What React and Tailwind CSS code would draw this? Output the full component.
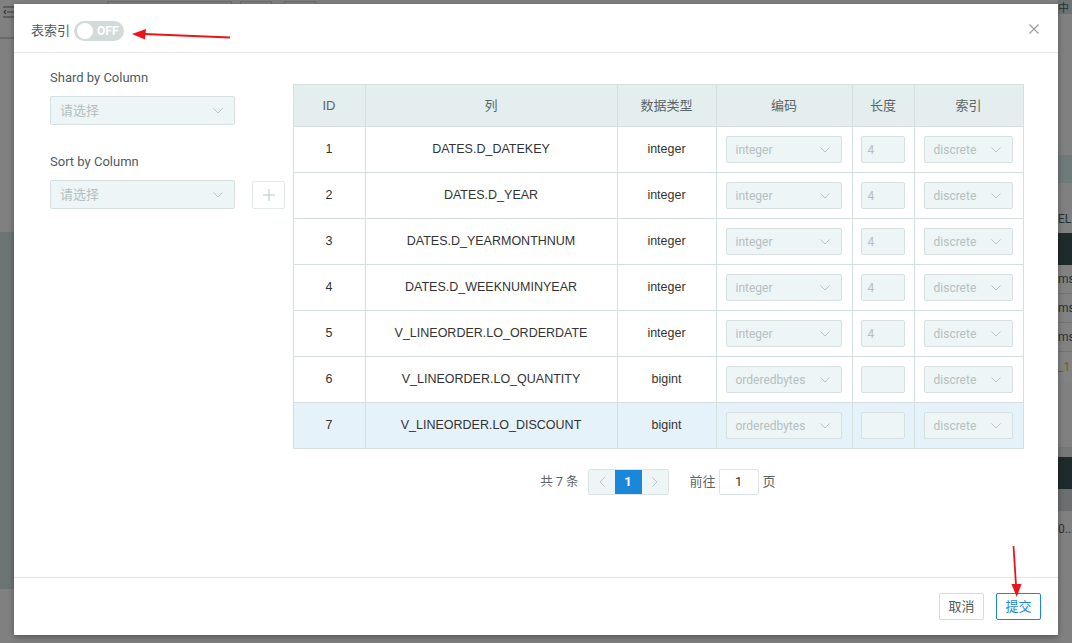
import { useState } from "react";

const rows = [
  { id: 1, col: "DATES.D_DATEKEY", type: "integer", enc: "integer", len: "4" },
  { id: 2, col: "DATES.D_YEAR", type: "integer", enc: "integer", len: "4" },
  { id: 3, col: "DATES.D_YEARMONTHNUM", type: "integer", enc: "integer", len: "4" },
  { id: 4, col: "DATES.D_WEEKNUMINYEAR", type: "integer", enc: "integer", len: "4" },
  { id: 5, col: "V_LINEORDER.LO_ORDERDATE", type: "integer", enc: "integer", len: "4" },
  { id: 6, col: "V_LINEORDER.LO_QUANTITY", type: "bigint", enc: "orderedbytes", len: "" },
  { id: 7, col: "V_LINEORDER.LO_DISCOUNT", type: "bigint", enc: "orderedbytes", len: "" },
];

const font = { fontFamily: "Roboto, 'Noto Sans CJK SC', sans-serif" };
const cellFont = { fontFamily: "'Liberation Sans', 'Noto Sans CJK SC', sans-serif" };

function Chevron({ className = "" }) {
  return (
    <svg width="10" height="6" viewBox="0 0 10 6" className={className}>
      <path d="M0.5 0.5 L5 5 L9.5 0.5" fill="none" stroke="#b9c4c6" strokeWidth="1" />
    </svg>
  );
}

function FakeSelect({ value, className = "" }) {
  return (
    <div
      className={`flex items-center justify-between border border-[#d6e0e1] bg-[#eef5f6] rounded-[2px] text-[12px] text-[#b4bfc1] ${className}`}
      style={font}
    >
      <span>{value}</span>
      <Chevron />
    </div>
  );
}

function BackgroundPage() {
  return (
    <div className="absolute inset-0 flex">
      <div className="w-[14px] flex flex-col">
        <div className="h-[232px] bg-[#808080] relative">
          <svg width="12" height="12" viewBox="0 0 12 12" className="absolute left-[3px] top-[6px]">
            <path d="M0 1 H12 M4 6 H12 M0 11 H12 M3 4 L1 6 L3 8" stroke="#3a3a3a" strokeWidth="1.2" fill="none" />
          </svg>
          <div className="absolute left-0 top-[37px] w-full h-[2px] bg-[#6a6a6a]" />
        </div>
        <div className="h-[357px] bg-[#6c7474]" />
        <div className="flex-1 bg-[#808080]" />
      </div>
      <div className="flex-1 bg-[#808080]">
        <div className="flex gap-[8px] pl-[93px] pt-[1px]">
          <div className="w-[125px] h-[10px] border border-[#6e6e6e]" />
          <div className="w-[32px] h-[10px] border border-[#6e6e6e]" />
          <div className="w-[32px] h-[10px] border border-[#6e6e6e] ml-[4px]" />
        </div>
      </div>
      <div className="w-[14px] flex flex-col text-[12px] text-[#2a3232] overflow-hidden whitespace-nowrap" style={font}>
        <div className="h-[14px] bg-[#6d7474] flex items-end text-[11px] leading-none">中</div>
        <div className="h-[141px] bg-[#808080]" />
        <div className="h-[28px] bg-[#6f7b7b]" />
        <div className="h-[50px] bg-[#808080] flex items-end leading-none pb-[8px]">EL</div>
        <div className="h-[32px] bg-[#1f2a2c]" />
        <div className="h-[29px] bg-[#828282] border-b border-[#747474] flex items-center">ms</div>
        <div className="h-[29px] bg-[#828282] border-b border-[#747474] flex items-center">ms</div>
        <div className="h-[29px] bg-[#828282] border-b border-[#747474] flex items-center">ms</div>
        <div className="h-[30px] bg-[#828282] flex items-center text-[#7a5a1a]">_1</div>
        <div className="h-[65px] bg-[#808080]" />
        <div className="h-[10px] bg-[#777777]" />
        <div className="h-[32px] bg-[#1f2a2c]" />
        <div className="h-[22px] bg-[#6b6f6f]" />
        <div className="h-[36px] bg-[#808080] flex items-center">0...</div>
        <div className="flex-1 bg-[#808080]" />
      </div>
    </div>
  );
}

export default function App() {
  const [on] = useState(false);

  return (
    <div className="relative w-[1072px] h-[643px] overflow-hidden bg-[#808080]" style={font}>
      <BackgroundPage />

      <div className="absolute left-[14px] top-[4px] w-[1044px] h-[631px] bg-white shadow-[0_2px_6px_rgba(0,0,0,0.35)] flex flex-col">
        {/* header */}
        <div className="h-[49px] border-b border-[#e6e6e6] flex items-center pl-[17px] pr-[19px] pt-[5px] shrink-0">
          <span className="text-[13px] text-[#4e5a5b]">表索引</span>
          <div className="ml-[4px] w-[50px] h-[20px] rounded-full bg-[#d3dbda] flex items-center pl-[3px] gap-[4px]">
            <div className="w-[16px] h-[16px] rounded-full bg-white" />
            <span className="text-[12px] font-bold text-white leading-none">{on ? "ON" : "OFF"}</span>
          </div>
          <div className="flex-1" />
          <svg width="10" height="10" viewBox="0 0 10 10" className="mb-[3px]">
            <path d="M0.5 0.5 L9.5 9.5 M9.5 0.5 L0.5 9.5" stroke="#9a9a9a" strokeWidth="1.1" />
          </svg>
        </div>

        {/* body */}
        <div className="flex-1 flex items-start pl-[36px]">
          <div className="w-[235px] pt-[15px] shrink-0">
            <div className="text-[13px] text-[#4f5b5d] leading-[20px]">Shard by Column</div>
            <FakeSelect value="请选择" className="mt-[8px] w-[185px] h-[29px] pl-[9px] pr-[11px] !text-[13px]" />
            <div className="text-[13px] text-[#4f5b5d] leading-[20px] mt-[27px]">Sort by Column</div>
            <div className="mt-[8px] flex items-center gap-[17px]">
              <FakeSelect value="请选择" className="w-[185px] h-[29px] pl-[9px] pr-[11px] !text-[13px]" />
              <div className="w-[33px] h-[28px] border border-[#e3e8e9] rounded-[2px] flex items-center justify-center">
                <svg width="12" height="12" viewBox="0 0 12 12">
                  <path d="M6 0 V12 M0 6 H12" stroke="#b9c3c5" strokeWidth="1" />
                </svg>
              </div>
            </div>
          </div>

          <div className="ml-[8px] mt-[31px] w-[730px] flex flex-col items-center">
            <table className="w-[730px] border-collapse table-fixed text-[12.5px]" style={cellFont}>
              <colgroup>
                <col className="w-[72px]" />
                <col className="w-[252px]" />
                <col className="w-[99px]" />
                <col className="w-[136px]" />
                <col className="w-[62px]" />
                <col className="w-[109px]" />
              </colgroup>
              <thead>
                <tr className="h-[42px] bg-[#e4eeee] text-[#5a6567] text-[13px]">
                  {["ID", "列", "数据类型", "编码", "长度", "索引"].map((h) => (
                    <th key={h} className="border border-[#d5dfdf] font-normal text-center">
                      {h}
                    </th>
                  ))}
                </tr>
              </thead>
              <tbody>
                {rows.map((r) => (
                  <tr key={r.id} className={`h-[46px] text-[#333333] ${r.id === 7 ? "bg-[#e6f2fa]" : "bg-white"}`}>
                    <td className="border border-[#d5dfdf] text-center">{r.id}</td>
                    <td className="border border-[#d5dfdf] text-center">{r.col}</td>
                    <td className="border border-[#d5dfdf] text-center">{r.type}</td>
                    <td className="border border-[#d5dfdf] px-[9px]">
                      <FakeSelect value={r.enc} className="w-[116px] h-[27px] pl-[9px] pr-[11px]" />
                    </td>
                    <td className="border border-[#d5dfdf] px-[8px]">
                      <div
                        className="w-[44px] h-[27px] border border-[#d6e0e1] bg-[#eef5f6] rounded-[2px] text-[12px] text-[#b4bfc1] flex items-center pl-[6px]"
                        style={font}
                      >
                        {r.len}
                      </div>
                    </td>
                    <td className="border border-[#d5dfdf] px-[9px]">
                      <FakeSelect value="discrete" className="w-[89px] h-[27px] pl-[9px] pr-[11px]" />
                    </td>
                  </tr>
                ))}
              </tbody>
            </table>

            {/* pagination */}
            <div className="mt-[20px] flex items-center text-[13px] text-[#5a6466]">
              <span className="text-[12.5px]">共 7 条</span>
              <div className="ml-[9px] flex h-[26px] border border-[#dbe3e4] rounded-[2px] overflow-hidden">
                <div className="w-[26px] bg-[#eef5f6] flex items-center justify-center">
                  <svg width="6" height="10" viewBox="0 0 6 10">
                    <path d="M5.5 0.5 L1 5 L5.5 9.5" fill="none" stroke="#b9c4c6" />
                  </svg>
                </div>
                <div className="w-[27px] bg-[#1a87d8] text-white font-bold flex items-center justify-center">1</div>
                <div className="w-[26px] bg-[#eef5f6] flex items-center justify-center">
                  <svg width="6" height="10" viewBox="0 0 6 10">
                    <path d="M0.5 0.5 L5 5 L0.5 9.5" fill="none" stroke="#b9c4c6" />
                  </svg>
                </div>
              </div>
              <span className="ml-[21px]">前往</span>
              <div className="ml-[3px] w-[40px] h-[26px] border border-[#dbe3e4] rounded-[2px] flex items-center justify-center text-[#333]">1</div>
              <span className="ml-[4px]">页</span>
            </div>
          </div>
        </div>

        {/* footer */}
        <div className="h-[58px] border-t border-[#e6e6e6] flex items-center justify-end gap-[12px] pr-[17px] shrink-0">
          <button className="w-[45px] h-[27px] border border-[#d5dcdd] rounded-[2px] text-[13px] text-[#4e5a5b] bg-white">取消</button>
          <button className="w-[45px] h-[27px] border border-[#1a87d8] rounded-[2px] text-[13px] text-[#1a87d8] bg-white">提交</button>
        </div>
      </div>

      {/* annotation arrows */}
      <svg className="absolute inset-0 pointer-events-none" width="1072" height="643">
        <line x1="230" y1="37.5" x2="144" y2="34" stroke="#e8161a" strokeWidth="1.8" />
        <polygon points="132,34 146,29 145,39.5" fill="#e8161a" />
        <line x1="1013.5" y1="546" x2="1016" y2="585" stroke="#e8161a" strokeWidth="1.8" />
        <polygon points="1016.7,597 1011.5,584 1021.5,584" fill="#e8161a" />
      </svg>
    </div>
  );
}
